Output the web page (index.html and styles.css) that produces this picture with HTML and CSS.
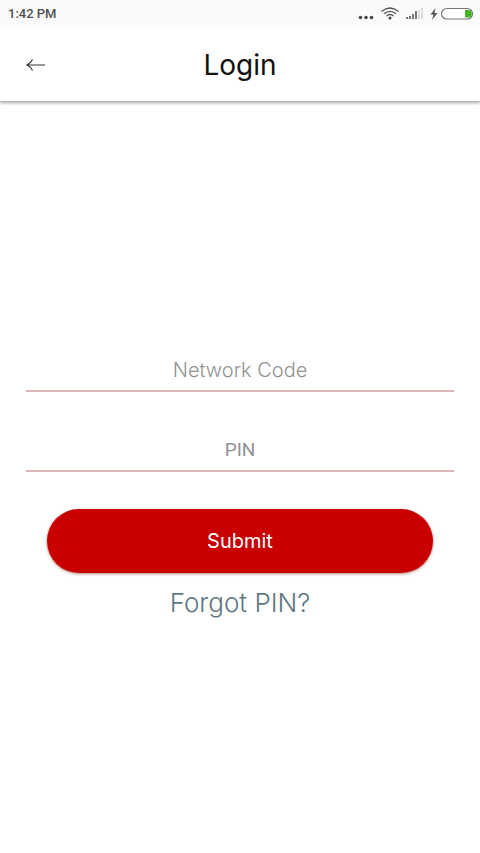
FILE: index.html
```html
<!DOCTYPE html>
<html lang="en">
<head>
<meta charset="utf-8">
<meta name="viewport" content="width=device-width, initial-scale=1">
<title>Login</title>
<link rel="stylesheet" href="styles.css">
</head>
<body>
<div class="status">
  <span class="clock">1:42 PM</span>
  <svg class="status-icons" width="118" height="18" viewBox="0 0 118 18" aria-hidden="true">
    <g fill="#4a4a4a">
      <circle cx="4.500" cy="12.500" r="1.800"/><circle cx="10" cy="12.500" r="1.800"/><circle cx="15.500" cy="12.500" r="1.800"/>
      <circle cx="34" cy="13" r="1.500"/>
    </g>
    <g fill="none" stroke="#555" stroke-width="1.300">
      <path d="M25.500 6.500Q34 -.500 42.500 6.500"/>
      <path d="M28 8.800Q34 3.800 40 8.800"/>
      <path d="M30.500 11Q34 8 37.500 11"/>
    </g>
    <g fill="#777">
      <path d="M50 12h2v2h-2zM53 11h2v3h-2zM56 9h2v5h-2zM59 6h2v8h-2z"/>
      <path fill="#ddd" d="M62 5h2v9h-2zM65 3h2v11h-2z"/>
      <path fill="#555" d="M79.500 3l-5 6.500h3l-1.500 5.500 5.500-7h-3z"/>
    </g>
    <rect x="85.500" y="3.500" width="31" height="10.500" rx="5.250" fill="#fff" stroke="#777" stroke-width="1.200"/>
    <path d="M109 5h3a3.750 3.750 0 0 1 0 7.500h-3z" fill="#43b51f"/>
  </svg>
</div>
<header class="bar">
  <button class="back" type="button" aria-label="Back">
    <svg width="20" height="14" viewBox="0 0 20 14" fill="none" stroke="#333" stroke-width="1.200" aria-hidden="true">
      <path d="M19 7H1.500M6.500 1.500Q4.500 5.500 1 7Q4.500 8.500 6.500 12.500"/>
    </svg>
  </button>
  <h1 class="title">Login</h1>
</header>
<main class="content">
  <form class="form">
    <input class="field" type="text" placeholder="Network Code" aria-label="Network Code">
    <input class="field field-pin" type="password" placeholder="PIN" aria-label="PIN">
    <button class="submit" type="submit">Submit</button>
    <a class="forgot" href="#">Forgot PIN?</a>
  </form>
</main>
</body>
</html>
```
FILE: styles.css
```css
* {
  box-sizing: border-box;
}

body {
  margin: 0;
  min-height: 100vh;
  display: flex;
  flex-direction: column;
  background: #fff;
  font-family: Inter, "Liberation Sans", sans-serif;
}

.status {
  display: flex;
  align-items: center;
  justify-content: space-between;
  height: 27px;
  padding: 0 6px 0 8px;
  background: #fafafa;
}

.clock {
  font: 500 13px/16px Roboto, sans-serif;
  color: #505050;
}

.bar {
  display: grid;
  grid-template-columns: 20px 1fr 20px;
  align-items: center;
  height: 74px;
  padding: 2px 26px 0;
  box-shadow: 0 2px 3px rgba(0, 0, 0, 0.35);
  clip-path: inset(0 0 -8px 0);
}

.back {
  display: flex;
  padding: 0;
  border: 0;
  background: none;
}

.title {
  margin: 0;
  font-size: 28px;
  font-weight: 400;
  line-height: 32px;
  text-align: center;
  color: #111;
}

.content {
  flex: 1;
  display: flex;
  flex-direction: column;
  justify-content: center;
  padding: 14px 26px 0;
}

.form {
  display: flex;
  flex-direction: column;
  align-items: center;
}

.field {
  width: 100%;
  height: 43px;
  margin-bottom: 37px;
  padding: 0;
  border: 0;
  border-bottom: 2px solid #dcb8ba;
  background: none;
  font: 300 20px/24px Inter, sans-serif;
  text-align: center;
  color: #333;
  outline: none;
}

.field-pin {
  font: 400 19px/24px Roboto, sans-serif;
}

.field::placeholder {
  color: #929292;
  opacity: 1;
}

.submit {
  width: 90%;
  height: 64px;
  border: 0;
  border-radius: 32px;
  background: #c90000;
  box-shadow: 0 1px 3px rgba(120, 0, 0, 0.5);
  font: 400 20px/24px Inter, sans-serif;
  color: #fff;
}

.forgot {
  margin-top: 14px;
  font-size: 26px;
  font-weight: 300;
  line-height: 32px;
  color: #5f7682;
  text-decoration: none;
}
```
